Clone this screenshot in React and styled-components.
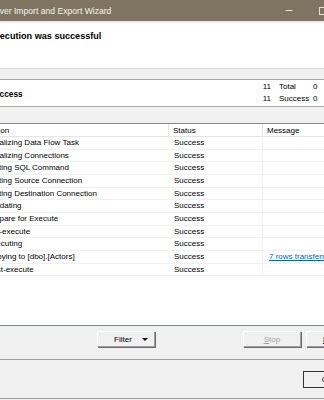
import styled, { createGlobalStyle } from 'styled-components';

const GlobalStyle = createGlobalStyle`
  html, body {
    margin: 0;
    padding: 0;
    background: #f0f0f0;
    overflow: hidden;
  }
  * {
    box-sizing: border-box;
  }
`;

const Viewport = styled.div`
  width: 324px;
  height: 400px;
  overflow: hidden;
  font-family: "Liberation Sans", Arial, sans-serif;
  color: #000;
`;

const Window = styled.div`
  margin-left: -60px;
  width: 434px;
  height: 400px;
  display: flex;
  flex-direction: column;
  background: #f0f0f0;
`;

const TitleBar = styled.div`
  height: 21px;
  flex: none;
  display: flex;
  align-items: center;
  background: #7f7461;
  padding-left: 27px;
`;

const TitleText = styled.span`
  flex: 1;
  font-size: 8.6px;
  color: #f6f3ee;
  white-space: nowrap;
`;

const CaptionButton = styled.div`
  width: 34px;
  height: 21px;
  display: flex;
  align-items: center;
  justify-content: center;
`;

const Header = styled.div`
  flex: none;
  height: 48px;
  background: #fff;
  border-top: 2px solid #ebebeb;
  border-bottom: 1px solid #dadada;
  padding: 7px 0 0 31px;
`;

const Heading = styled.h1`
  margin: 0;
  font-size: 9.1px;
  line-height: 12px;
  font-weight: bold;
  white-space: nowrap;
`;

const Body = styled.div`
  flex: 1;
  display: flex;
  flex-direction: column;
  padding: 10px 10px 0 10px;
`;

const Summary = styled.div`
  height: 28px;
  flex: none;
  display: flex;
  background: #fff;
  border: 1px solid #a9a9a9;
`;

const SummaryLabel = styled.div`
  padding: 8px 0 0 38px;
  font-size: 8.3px;
  line-height: 12px;
  font-weight: bold;
`;

const Counts = styled.div`
  margin-left: auto;
  width: 106px;
  display: grid;
  grid-template-columns: 14px 42px 14px 36px;
  grid-auto-rows: 12px;
  padding-top: 1px;
  font-size: 8px;
  line-height: 12px;
  align-content: start;
`;

const Count = styled.span`
  text-align: ${(p) => (p.$right ? 'right' : 'left')};
  padding-left: ${(p) => (p.$pad ? '8px' : '0')};
  white-space: nowrap;
`;

const List = styled.div`
  margin-top: 16px;
  height: 203px;
  flex: none;
  background: #fff;
  border: 1px solid #828790;
  overflow: hidden;
`;

const Columns = styled.div`
  display: grid;
  grid-template-columns: 218px 94px 1fr;
`;

const HeadCell = styled.div`
  height: 13px;
  font-size: 8px;
  line-height: 13px;
  padding-left: ${(p) => p.$pad}px;
  border-right: 1px solid #e5e5e5;
  border-bottom: 1px solid #e5e5e5;
  white-space: nowrap;
  background: #fff;
`;

const Cell = styled.div`
  height: 12.67px;
  font-size: 8px;
  line-height: 12px;
  padding-left: ${(p) => p.$pad}px;
  border-bottom: 1px solid #f0f0f0;
  border-right: ${(p) => (p.$divider ? '1px solid #f0f0f0' : 'none')};
  white-space: nowrap;
  overflow: hidden;
`;

const Link = styled.a`
  color: #0066cc;
  text-decoration: underline;
  cursor: pointer;
`;

const ButtonRow = styled.div`
  margin-top: 5px;
  display: flex;
  gap: 5px;
`;

const Button = styled.button`
  width: 58px;
  height: 16px;
  padding: 0;
  font-family: "Liberation Sans", Arial, sans-serif;
  font-size: 8px;
  color: ${(p) => (p.disabled ? '#a0a0a0' : '#000')};
  background: #f0f0f0;
  border: 1px solid;
  border-color: #fff #a0a0a0 #a0a0a0 #fff;
  box-shadow: 1px 1px 0 #696969;
  display: flex;
  align-items: center;
  justify-content: center;
  gap: 10px;

  u {
    text-decoration: underline;
  }
`;

const FilterButton = styled(Button)`
  margin-left: 147px;
  margin-right: auto;
  padding-left: 10px;
`;

const Arrow = styled.span`
  width: 0;
  height: 0;
  border-left: 3px solid transparent;
  border-right: 3px solid transparent;
  border-top: 3px solid #000;
`;

const Separator = styled.div`
  margin-top: 12px;
  height: 1px;
  flex: none;
  background: #a0a0a0;
`;

const Footer = styled.div`
  flex: 1;
  display: flex;
  justify-content: flex-end;
  padding: 11px 13px 0 0;
  border-bottom: 1px solid #a0a0a0;
  margin-bottom: 1px;
`;

const DefaultButton = styled(Button)`
  height: 17px;
  border: 1px solid #333;
  box-shadow: none;
`;

const steps = [
  ['Initializing Data Flow Task', 'Success', ''],
  ['Initializing Connections', 'Success', ''],
  ['Setting SQL Command', 'Success', ''],
  ['Setting Source Connection', 'Success', ''],
  ['Setting Destination Connection', 'Success', ''],
  ['Validating', 'Success', ''],
  ['Prepare for Execute', 'Success', ''],
  ['Pre-execute', 'Success', ''],
  ['Executing', 'Success', ''],
  ['Copying to [dbo].[Actors]', 'Success', '7 rows transferred'],
  ['Post-execute', 'Success', ''],
];

export default function App() {
  return (
    <Viewport>
      <GlobalStyle />
      <Window>
        <TitleBar>
          <TitleText>SQL Server Import and Export Wizard</TitleText>
          <CaptionButton>
            <svg width="8" height="8" viewBox="0 0 8 8">
              <line x1="0.5" y1="3.5" x2="7.5" y2="3.5" stroke="#e6e2da" strokeWidth="1" />
            </svg>
          </CaptionButton>
          <CaptionButton>
            <svg width="8" height="8" viewBox="0 0 8 8">
              <rect x="0.5" y="0.5" width="7" height="7" fill="none" stroke="#e6e2da" strokeWidth="1" />
            </svg>
          </CaptionButton>
          <CaptionButton>
            <svg width="8" height="8" viewBox="0 0 8 8">
              <path d="M0.5 0.5 L7.5 7.5 M7.5 0.5 L0.5 7.5" stroke="#e6e2da" strokeWidth="1" />
            </svg>
          </CaptionButton>
        </TitleBar>

        <Header>
          <Heading>The execution was successful</Heading>
        </Header>

        <Body>
          <Summary>
            <SummaryLabel>Success</SummaryLabel>
            <Counts>
              <Count $right>11</Count>
              <Count $pad>Total</Count>
              <Count>0</Count>
              <Count>Error</Count>
              <Count $right>11</Count>
              <Count $pad>Success</Count>
              <Count>0</Count>
              <Count>Warning</Count>
            </Counts>
          </Summary>

          <List>
            <Columns>
              <HeadCell $pad={36}>Action</HeadCell>
              <HeadCell $pad={4}>Status</HeadCell>
              <HeadCell $pad={4}>Message</HeadCell>
              {steps.map(([action, status, message]) => (
                <>
                  <Cell key={action + 'a'} $pad={36}>{action}</Cell>
                  <Cell key={action + 's'} $pad={5} $divider>{status}</Cell>
                  <Cell key={action + 'm'} $pad={6}>
                    {message && <Link>{message}</Link>}
                  </Cell>
                </>
              ))}
            </Columns>
          </List>

          <ButtonRow>
            <FilterButton>
              Filter <Arrow />
            </FilterButton>
            <Button disabled>
              <span><u>S</u>top</span>
            </Button>
            <Button>
              <span><u>R</u>eport</span>
            </Button>
          </ButtonRow>
        </Body>

        <Separator />

        <Footer>
          <DefaultButton>Close</DefaultButton>
        </Footer>
      </Window>
    </Viewport>
  );
}
